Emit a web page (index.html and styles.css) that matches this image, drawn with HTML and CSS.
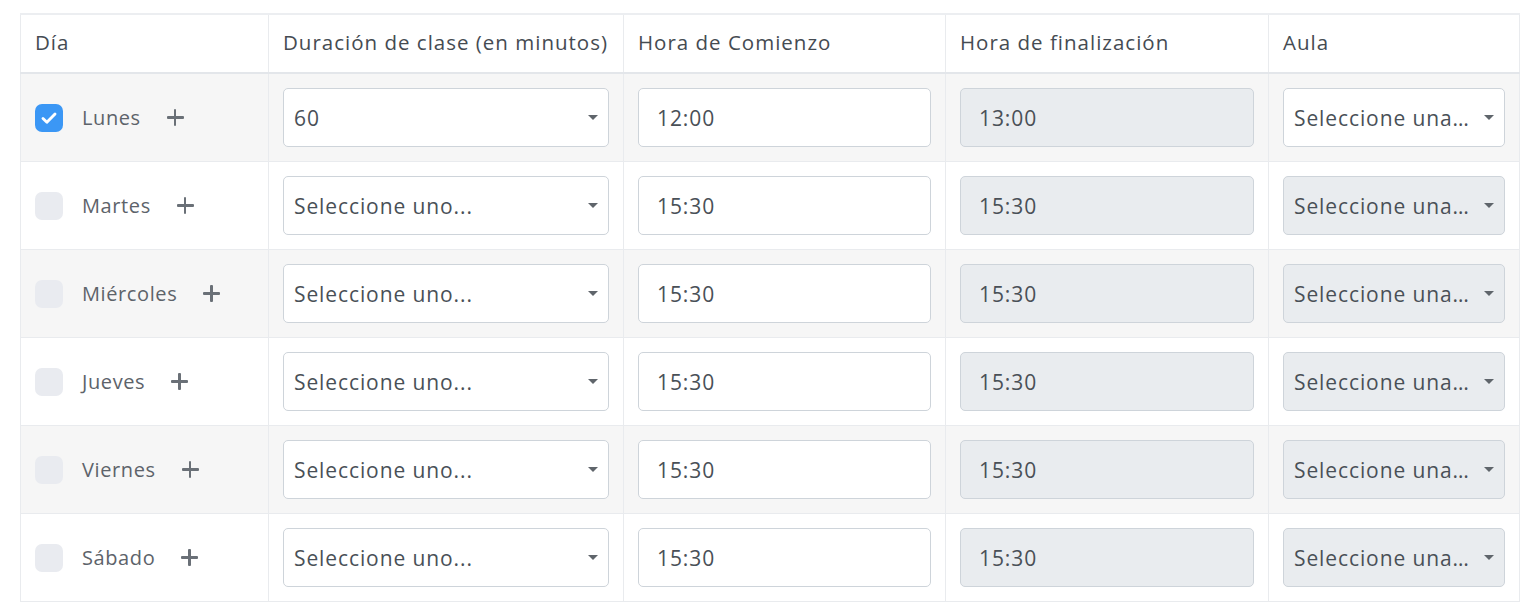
FILE: index.html
```html
<!DOCTYPE html>
<html lang="es">
<head>
<meta charset="utf-8">
<title>Horario</title>
<link rel="stylesheet" href="styles.css">
</head>
<body>
<div class="page">
<table class="schedule">
  <colgroup>
    <col class="c-day"><col class="c-dur"><col class="c-start"><col class="c-end"><col class="c-room">
  </colgroup>
  <thead>
    <tr>
      <th>Día</th>
      <th>Duración de clase (en minutos)</th>
      <th>Hora de Comienzo</th>
      <th>Hora de finalización</th>
      <th>Aula</th>
    </tr>
  </thead>
  <tbody>
    <tr class="alt">
      <td><div class="day"><span class="check on"><svg viewBox="0 0 16 16" width="20" height="20"><path d="M3.2 8.4l3.1 3 6.5-6.6" fill="none" stroke="#fff" stroke-width="2.3" stroke-linecap="round" stroke-linejoin="round"/></svg></span><span class="day-name">Lunes</span><span class="plus"></span></div></td>
      <td><div class="field select"><span class="val">60</span><span class="caret"></span></div></td>
      <td><div class="field">12:00</div></td>
      <td><div class="field disabled">13:00</div></td>
      <td><div class="field select room"><span class="val">Seleccione una…</span><span class="caret"></span></div></td>
    </tr>
    <tr>
      <td><div class="day"><span class="check"></span><span class="day-name">Martes</span><span class="plus"></span></div></td>
      <td><div class="field select"><span class="val">Seleccione uno...</span><span class="caret"></span></div></td>
      <td><div class="field">15:30</div></td>
      <td><div class="field disabled">15:30</div></td>
      <td><div class="field select room disabled"><span class="val">Seleccione una…</span><span class="caret"></span></div></td>
    </tr>
    <tr class="alt">
      <td><div class="day"><span class="check"></span><span class="day-name">Miércoles</span><span class="plus"></span></div></td>
      <td><div class="field select"><span class="val">Seleccione uno...</span><span class="caret"></span></div></td>
      <td><div class="field">15:30</div></td>
      <td><div class="field disabled">15:30</div></td>
      <td><div class="field select room disabled"><span class="val">Seleccione una…</span><span class="caret"></span></div></td>
    </tr>
    <tr>
      <td><div class="day"><span class="check"></span><span class="day-name">Jueves</span><span class="plus"></span></div></td>
      <td><div class="field select"><span class="val">Seleccione uno...</span><span class="caret"></span></div></td>
      <td><div class="field">15:30</div></td>
      <td><div class="field disabled">15:30</div></td>
      <td><div class="field select room disabled"><span class="val">Seleccione una…</span><span class="caret"></span></div></td>
    </tr>
    <tr class="alt">
      <td><div class="day"><span class="check"></span><span class="day-name">Viernes</span><span class="plus"></span></div></td>
      <td><div class="field select"><span class="val">Seleccione uno...</span><span class="caret"></span></div></td>
      <td><div class="field">15:30</div></td>
      <td><div class="field disabled">15:30</div></td>
      <td><div class="field select room disabled"><span class="val">Seleccione una…</span><span class="caret"></span></div></td>
    </tr>
    <tr>
      <td><div class="day"><span class="check"></span><span class="day-name">Sábado</span><span class="plus"></span></div></td>
      <td><div class="field select"><span class="val">Seleccione uno...</span><span class="caret"></span></div></td>
      <td><div class="field">15:30</div></td>
      <td><div class="field disabled">15:30</div></td>
      <td><div class="field select room disabled"><span class="val">Seleccione una…</span><span class="caret"></span></div></td>
    </tr>
  </tbody>
</table>
</div>
</body>
</html>
```

FILE: styles.css
```css
html, body {
  margin: 0;
  padding: 0;
  background: #ffffff;
}
body {
  font-family: "Open Sans", "DejaVu Sans", sans-serif;
  color: #495057;
}
.page {
  padding: 13px 0 0 20px;
}
.schedule {
  border-collapse: collapse;
  table-layout: fixed;
  width: 1499px;
  border-top: 2px solid #eceef1;
  border-left: 1px solid #e9ebee;
  border-right: 1px solid #e9ebee;
  border-bottom: 1px solid #e9ebee;
}
.c-day { width: 248px; }
.c-dur { width: 355px; }
.c-start { width: 322px; }
.c-end { width: 323px; }
.c-room { width: 251px; }

.schedule th {
  text-align: left;
  font-weight: 400;
  font-size: 20.5px;
  letter-spacing: 1px;
  color: #454b52;
  height: 59px;
  padding: 0 14px 3px 14px;
  border-right: 1px solid #e9ebee;
  border-bottom: 2px solid #e3e6ea;
  box-sizing: border-box;
  white-space: nowrap;
}
.schedule td {
  padding: 14px 14px;
  border-right: 1px solid #e9ebee;
  border-bottom: 1px solid #e9ebee;
  vertical-align: middle;
  height: 59px;
}
.schedule tr.alt td {
  background: #f6f6f6;
}
.day {
  display: flex;
  align-items: center;
  font-size: 20px;
  letter-spacing: 0.6px;
  color: #5d636a;
}
.check {
  width: 28px;
  height: 28px;
  border-radius: 7px;
  background: #e9ebf0;
  display: inline-flex;
  align-items: center;
  justify-content: center;
  flex: none;
  margin-right: 19px;
}
.check.on {
  background: #3b97f5;
}
.day-name {
  margin-right: 26px;
}
.plus {
  position: relative;
  width: 17px;
  height: 17px;
  flex: none;
}
.plus::before, .plus::after {
  content: "";
  position: absolute;
  background: #6a7077;
  border-radius: 1px;
}
.plus::before {
  left: 0; right: 0;
  top: 7px; height: 2.5px;
}
.plus::after {
  top: 0; bottom: 0;
  left: 7px; width: 2.5px;
}

.field {
  height: 59px;
  box-sizing: border-box;
  border: 1px solid #ced4da;
  border-radius: 5px;
  background: #ffffff;
  display: flex;
  align-items: center;
  padding: 0 18px;
  font-size: 21px;
  letter-spacing: 0.9px;
  color: #495057;
}
.field.disabled {
  background: #e9ecef;
}
.field.select {
  padding: 0 10px 0 10px;
  justify-content: space-between;
}
.field .val {
  white-space: nowrap;
  overflow: hidden;
  text-overflow: ellipsis;
  min-width: 0;
}
.caret {
  width: 0;
  height: 0;
  border-left: 5px solid transparent;
  border-right: 5px solid transparent;
  border-top: 5px solid #5f656b;
  flex: none;
  margin-left: 6px;
}
```
